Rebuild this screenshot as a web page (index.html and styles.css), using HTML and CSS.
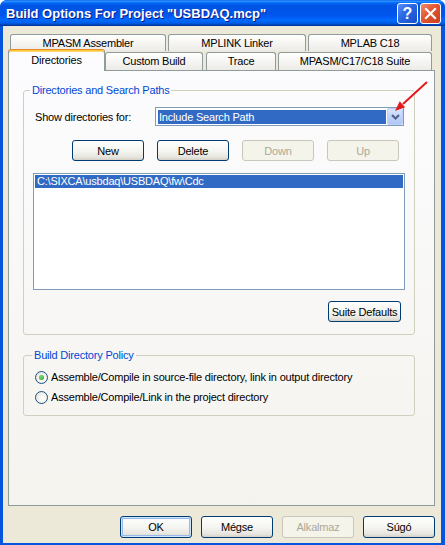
FILE: index.html
```html
<!DOCTYPE html>
<html lang="en">
<head>
    <meta charset="UTF-8">
    <title>Build Options For Project "USBDAQ.mcp"</title>
    <link rel="stylesheet" href="styles.css">
</head>
<body>
    <div class="window">
        <div class="titlebar">
            <span class="title">Build Options For Project "USBDAQ.mcp"</span>
            <div class="caption-buttons">
                <span class="cap-btn cap-help">?</span>
                <span class="cap-btn cap-close">
                    <svg width="13" height="13" viewBox="0 0 13 13">
                        <path d="M2 2 L11 11 M11 2 L2 11" stroke="#fff" stroke-width="2.2" stroke-linecap="square"/>
                    </svg>
                </span>
            </div>
        </div>

        <div class="client">
            <!-- Tab strip: two rows, the selected row sits in front -->
            <div class="tab-row tab-row-back">
                <div class="tab tab-asm">MPASM Assembler</div>
                <div class="tab tab-link">MPLINK Linker</div>
                <div class="tab tab-c18">MPLAB C18</div>
            </div>
            <div class="tab-row tab-row-front">
                <div class="tab tab-selected tab-dirs">Directories</div>
                <div class="tab tab-custom">Custom Build</div>
                <div class="tab tab-trace">Trace</div>
                <div class="tab tab-suite">MPASM/C17/C18 Suite</div>
            </div>

            <div class="tab-panel">
                <fieldset class="group group-paths">
                    <legend>Directories and Search Paths</legend>

                    <div class="combo-row">
                        <span class="combo-label">Show directories for:</span>
                        <div class="combo">
                            <span class="combo-value">Include Search Path</span>
                            <span class="combo-btn">
                                <svg width="9" height="6" viewBox="0 0 9 6">
                                    <path d="M1 1 L4.5 4.5 L8 1" fill="none" stroke="#4D6185" stroke-width="2"/>
                                </svg>
                            </span>
                        </div>
                    </div>

                    <div class="button-row">
                        <button class="btn">New</button>
                        <button class="btn">Delete</button>
                        <button class="btn" disabled>Down</button>
                        <button class="btn" disabled>Up</button>
                    </div>

                    <div class="listbox">
                        <div class="list-item selected">C:\SIXCA\usbdaq\USBDAQ\fw\Cdc</div>
                    </div>

                    <div class="defaults-row">
                        <button class="btn">Suite Defaults</button>
                    </div>
                </fieldset>

                <fieldset class="group group-policy">
                    <legend>Build Directory Policy</legend>
                    <label class="radio-row">
                        <input type="radio" name="policy" checked>
                        <span>Assemble/Compile in source-file directory, link in output directory</span>
                    </label>
                    <label class="radio-row">
                        <input type="radio" name="policy">
                        <span>Assemble/Compile/Link in the project directory</span>
                    </label>
                </fieldset>
            </div>

            <div class="dialog-buttons">
                <button class="btn btn-default">OK</button>
                <button class="btn">Mégse</button>
                <button class="btn" disabled>Alkalmaz</button>
                <button class="btn">Súgó</button>
            </div>
        </div>

        <!-- red pointer drawn over the combo box button -->
        <svg class="pointer" width="445" height="545" viewBox="0 0 445 545">
            <line x1="427" y1="82" x2="403" y2="104" stroke="#E3191C" stroke-width="2"/>
            <polygon points="395,111 399.7,101.3 405.1,107.3" fill="#E3191C"/>
        </svg>
    </div>
</body>
</html>
```

FILE: styles.css
```css
* {
    box-sizing: border-box;
}

body {
    margin: 0;
    background: #fff;
    font-family: "Liberation Sans", Arial, sans-serif;
    font-size: 11px;
    letter-spacing: -0.2px;
    color: #000;
}

/* Window frame */
.window {
    position: relative;
    width: 445px;
    height: 545px;
    display: flex;
    flex-direction: column;
    background: #0855DD;
    border-radius: 7px 7px 0 0;
    overflow: hidden;
}

.titlebar {
    height: 26px;
    flex: none;
    display: flex;
    align-items: center;
    justify-content: space-between;
    padding: 0 4px 0 6px;
    background: linear-gradient(to bottom,
        #0058EE 0%, #3593FF 4%, #288EFF 6%, #127DFF 8%, #036FFC 10%,
        #0262EE 14%, #0057E5 20%, #0054E3 24%, #0055EB 56%, #005BF5 66%,
        #026AFE 76%, #0062EF 86%, #0052D6 92%, #0040AB 96%, #003092 100%);
}

.title {
    color: #fff;
    font-weight: bold;
    font-size: 13px;
    letter-spacing: 0;
    text-shadow: 1px 1px 0 #0A1883;
    padding-top: 1px;
}

.caption-buttons {
    display: flex;
    gap: 2px;
    padding-top: 1px;
}

.cap-btn {
    width: 21px;
    height: 21px;
    border: 1px solid #fff;
    border-radius: 3px;
    display: flex;
    align-items: center;
    justify-content: center;
    color: #fff;
    font-weight: bold;
    font-size: 16px;
    letter-spacing: 0;
}

.cap-help {
    background: linear-gradient(135deg, #5A8CF5 0%, #2663E0 50%, #1A4FCB 100%);
}

.cap-close {
    background: linear-gradient(135deg, #F08D6E 0%, #E2542F 45%, #C7401E 100%);
}

/* Dialog client area */
.client {
    flex: 1;
    margin: 0 4px 4px 3px;
    padding: 8px 6px 5px 5px;
    background: #ECE9D8;
    display: flex;
    flex-direction: column;
}

/* Tabs */
.tab-row {
    display: flex;
    align-items: flex-end;
}

.tab-row-back {
    height: 17px;
    gap: 2px;
    padding-left: 2px;
}

.tab-row-front {
    position: relative;
    z-index: 1;
    height: 22px;
    margin-top: -2px;
}

.tab {
    border: 1px solid #919B9C;
    border-bottom: none;
    border-radius: 3px 3px 0 0;
    background: linear-gradient(to bottom, #FFFFFF, #ECEBE6);
    text-align: center;
    white-space: nowrap;
}

.tab-row-back .tab {
    height: 17px;
    line-height: 17px;
}

.tab-row-front .tab {
    height: 18px;
    line-height: 17px;
    margin-bottom: 1px;
}

.tab-row-front .tab.tab-selected {
    height: 22px;
    line-height: 20px;
    margin-bottom: 0;
    background: #FCFCFE;
    border-top: 1px solid #E68B2C;
    box-shadow: inset 0 1px 0 #FFC73C, inset 0 2px 0 #FFD870;
}

.tab-asm { width: 156px; }
.tab-link { width: 138px; }
.tab-c18 { width: 124px; }
.tab-dirs { width: 97px; }
.tab-custom { width: 98px; margin-right: 3px; }
.tab-trace { width: 70px; margin-right: 2px; }
.tab-suite { width: 154px; }

.tab-panel {
    height: 436px;
    flex: none;
    margin-top: -1px;
    border: 1px solid #919B9C;
    background: linear-gradient(to bottom, #FCFCFE, #F4F3EE);
}

/* Group boxes */
.group {
    margin: 13px 19px 0 14px;
    border: 1px solid #D0D0BF;
    border-radius: 3px;
    padding: 10px 9px 12px;
    min-width: 0;
}

.group legend {
    color: #0046D5;
    line-height: 13px;
    padding: 0 2px;
    margin-left: -3px;
}

.group-policy {
    margin-top: 14px;
    padding: 5px 9px 8px 11px;
}

.combo-row {
    display: grid;
    grid-template-columns: 122px 249px;
    align-items: center;
}

.combo-label {
    padding-left: 2px;
}

.combo {
    height: 19px;
    border: 1px solid #7F9DB9;
    background: #fff;
    display: flex;
}

.combo-value {
    flex: 1;
    margin: 2px 1px 1px 2px;
    background: #316AC5;
    color: #fff;
    line-height: 14px;
    padding-left: 1px;
}

.combo-btn {
    width: 16px;
    display: flex;
    align-items: center;
    justify-content: center;
    border: 1px solid #BAD0FB;
    border-radius: 2px;
    background: linear-gradient(to bottom, #DCE6FD, #C1D3FB 50%, #B2C7F5);
}

.button-row {
    display: flex;
    gap: 13px;
    padding-left: 39px;
    margin-top: 14px;
}

.listbox {
    height: 117px;
    margin-top: 12px;
    border: 1px solid #7F9DB9;
    background: #fff;
    padding: 1px;
}

.list-item {
    height: 13px;
    line-height: 13px;
    padding-left: 2px;
}

.list-item.selected {
    background: #316AC5;
    color: #fff;
}

.defaults-row {
    display: flex;
    justify-content: flex-end;
    padding-right: 4px;
    margin-top: 11px;
}

/* XP push buttons */
.btn {
    width: 72px;
    height: 21px;
    padding: 0;
    border: 1px solid #003C74;
    border-radius: 3px;
    background: linear-gradient(to bottom, #FFFFFF 0%, #F4F4F0 55%, #E6E5DE 85%, #D6D0C5 100%);
    font-family: inherit;
    font-size: 11px;
    letter-spacing: inherit;
    color: #000;
}

.defaults-row .btn {
    width: 73px;
}

.btn:disabled {
    border-color: #C9C7BA;
    background: #F5F4EA;
    color: #ACA899;
}

.btn-default {
    box-shadow: inset 0 0 0 1px #CEE7FF, inset 0 0 0 2px #98B8EA;
}

/* Radio buttons */
.radio-row {
    display: flex;
    align-items: center;
    height: 20px;
}

.radio-row input {
    appearance: none;
    -webkit-appearance: none;
    width: 13px;
    height: 13px;
    margin: 0 3px 0 0;
    border: 1px solid #1C5180;
    border-radius: 50%;
    background: radial-gradient(circle at 60% 60%, #FFFFFF 0%, #F2F1EC 45%, #DCDBD5 100%);
    display: flex;
    align-items: center;
    justify-content: center;
}

.radio-row input:checked::after {
    content: "";
    width: 5px;
    height: 5px;
    border-radius: 50%;
    background: radial-gradient(circle at 40% 40%, #7EDB7A, #21A121);
}

/* Bottom dialog buttons */
.dialog-buttons {
    display: flex;
    justify-content: flex-end;
    gap: 9px;
    margin-top: 10px;
}

.dialog-buttons .btn {
    height: 22px;
}

.pointer {
    position: absolute;
    top: 0;
    left: 0;
    pointer-events: none;
}
```
